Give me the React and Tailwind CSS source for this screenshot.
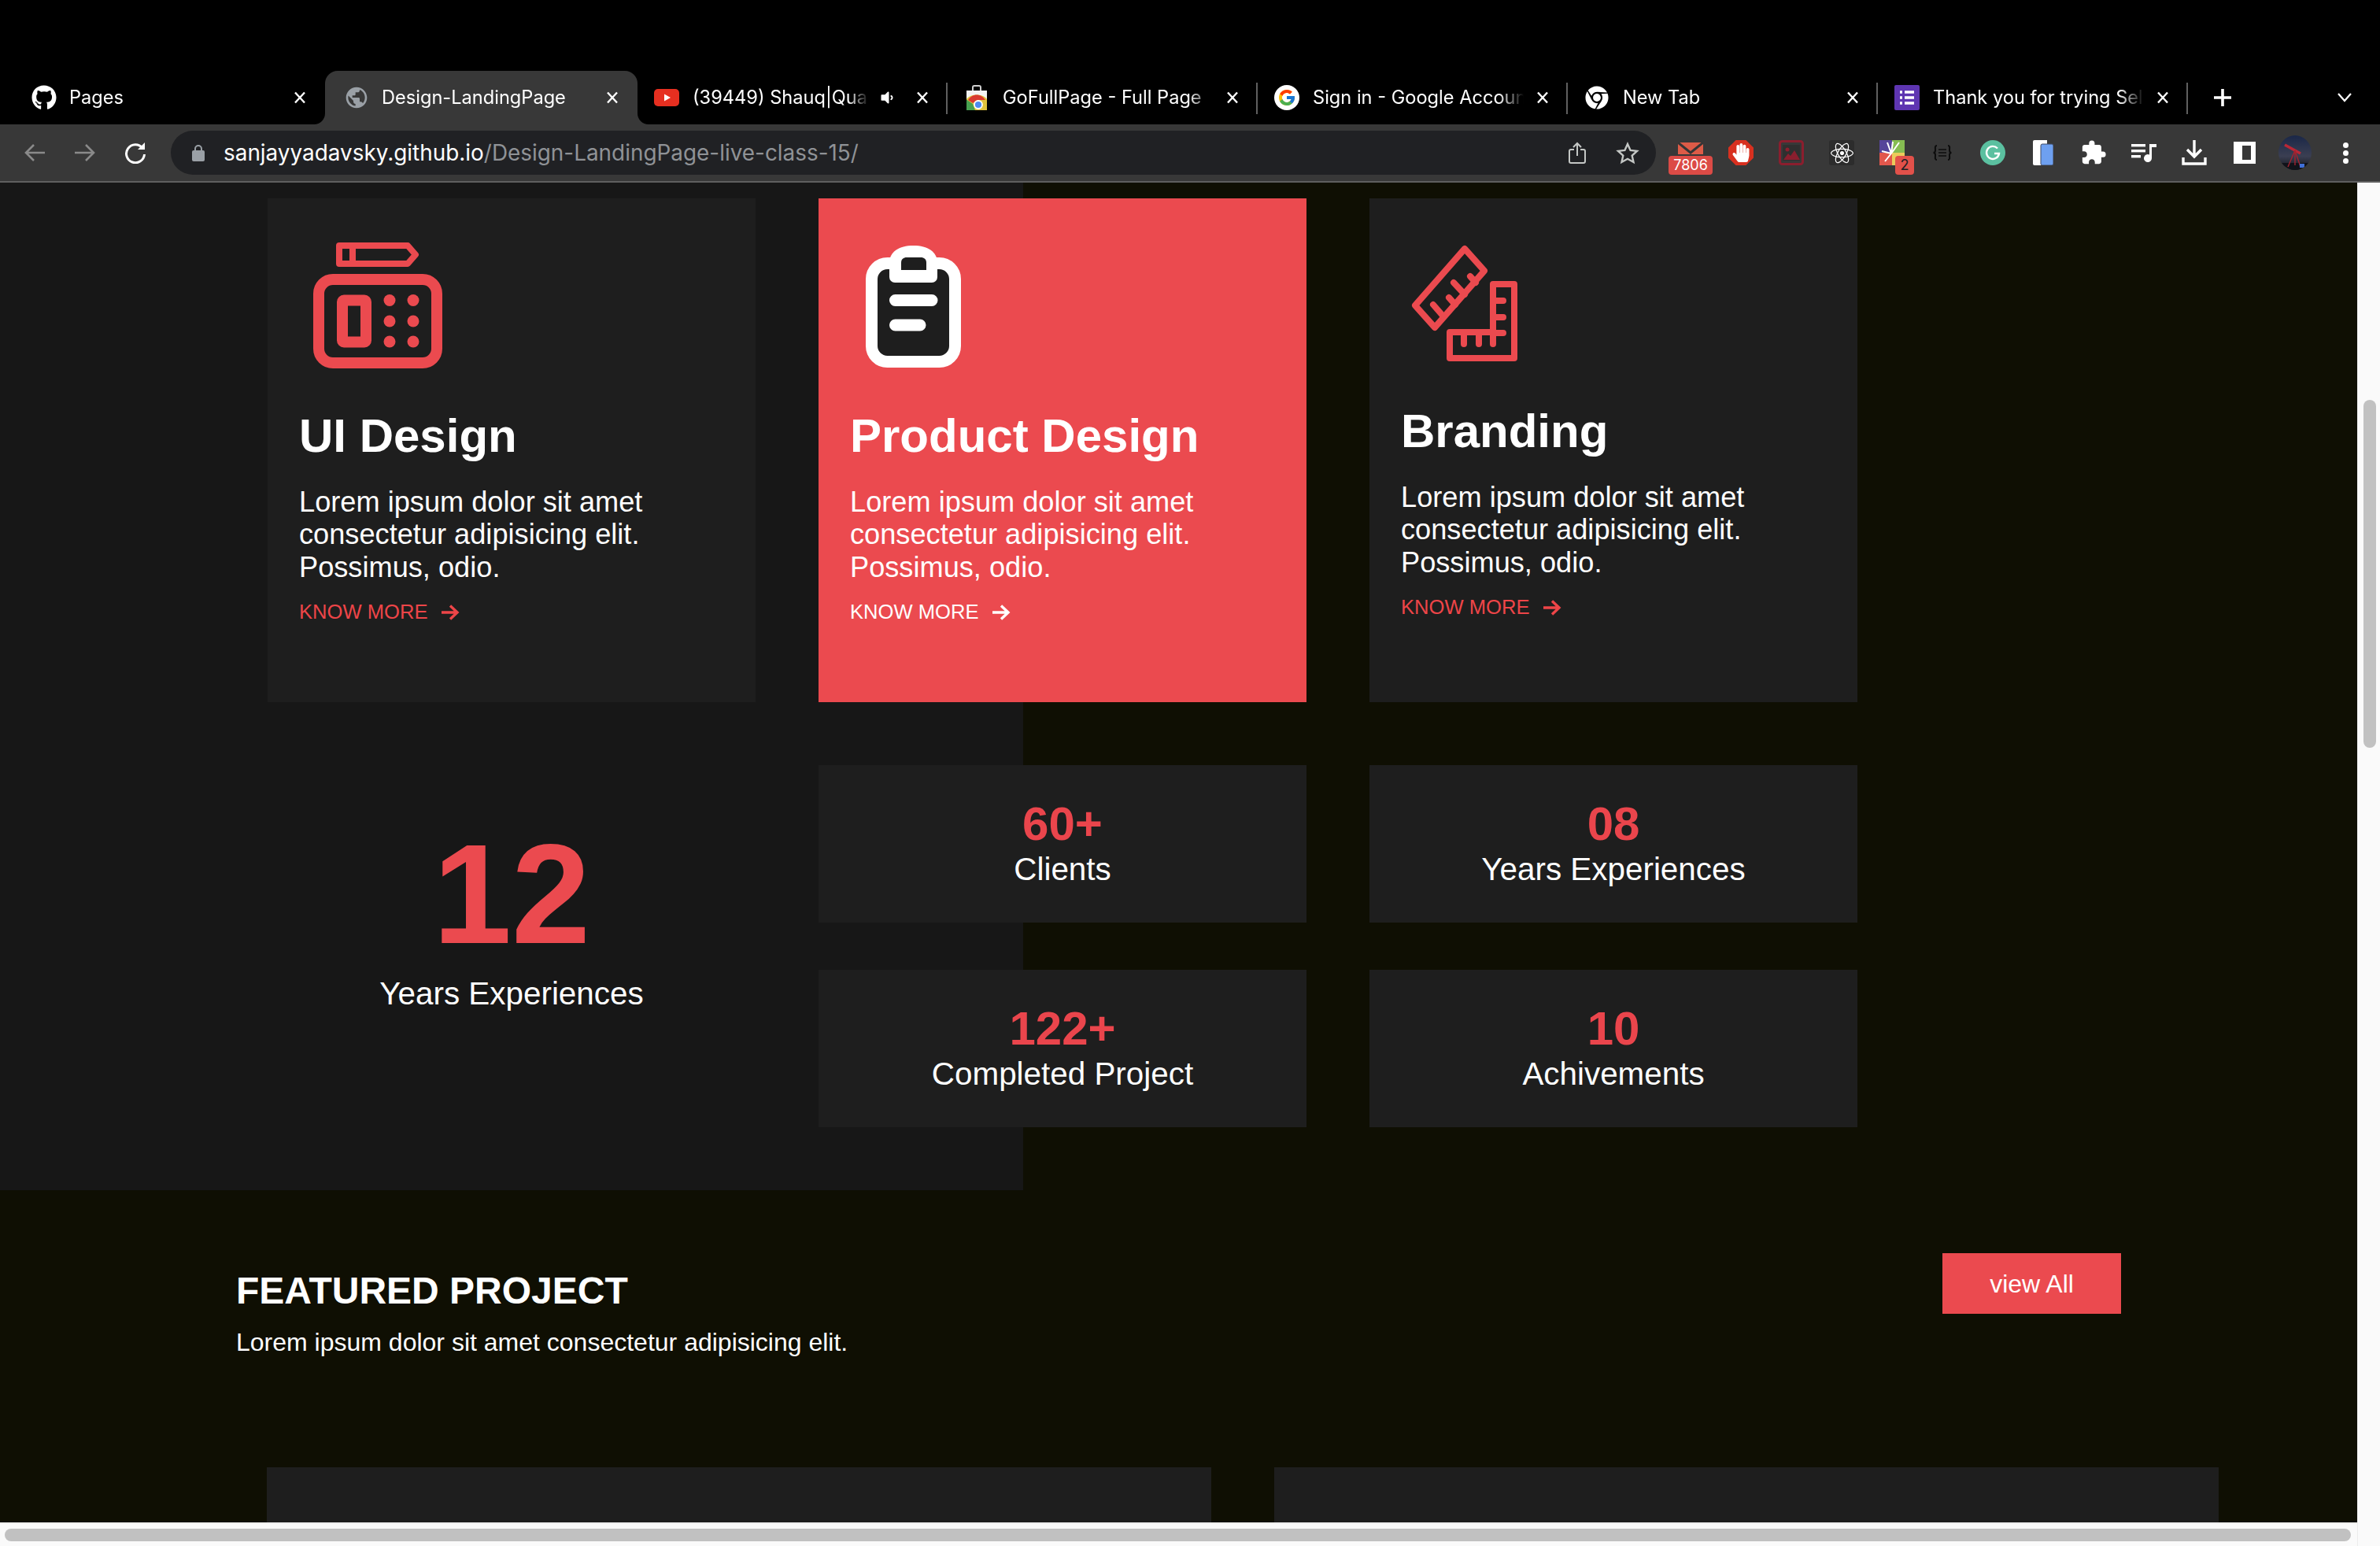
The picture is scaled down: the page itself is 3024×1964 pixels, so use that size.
import { FaGithub, FaChrome, FaHandPaper, FaReact, FaVolumeDown } from "react-icons/fa";
import { MdPublic, MdExtension } from "react-icons/md";
import { FcGoogle } from "react-icons/fc";

const RED = "#eb4a4f";

function CloseX() {
  return (
    <svg width="16" height="16" viewBox="0 0 16 16" className="shrink-0">
      <path d="M2 1.5L14 14.5M14 1.5L2 14.5" stroke="#fff" strokeWidth="2.4" />
    </svg>
  );
}

function YoutubeIcon() {
  return (
    <svg width="32" height="32" viewBox="0 0 32 32">
      <rect x="0" y="5" width="32" height="22" rx="5" fill="#e62f20" />
      <path d="M13 11.5L21 16L13 20.5Z" fill="#fff" />
    </svg>
  );
}

function StoreIcon() {
  return (
    <svg width="26" height="32" viewBox="0 0 26 32">
      <path d="M8 8V3a2 2 0 0 1 2-2h6a2 2 0 0 1 2 2v5" fill="none" stroke="#cfcfcf" strokeWidth="2" />
      <rect x="0" y="7" width="26" height="25" fill="#f3f3f3" />
      <path d="M0 32V18C3 14 8 12.5 13 12.5S23 14 26 18V32Z" fill="#e0c33d" />
      <path d="M2 19C5 14.5 9 12.5 13 12.5S21 14.5 24 19H14L8 23Z" fill="#d93a2f" />
      <path d="M0 18.5L8 24L11 32H0Z" fill="#46a04f" />
      <circle cx="15" cy="25" r="5" fill="#4c8bf0" stroke="#fff" strokeWidth="1.8" />
    </svg>
  );
}

function GoogleIcon() {
  return (
    <span className="flex h-[32px] w-[32px] items-center justify-center rounded-full bg-white">
      <FcGoogle size={24} />
    </span>
  );
}

function FormsIcon() {
  return (
    <svg width="32" height="32" viewBox="0 0 32 32">
      <rect width="32" height="32" rx="2" fill="#5e35b1" />
      <path d="M7 9h3M13 9h12M7 16h3M13 16h12M7 23h3M13 23h12" stroke="#fff" strokeWidth="3.4" />
    </svg>
  );
}

const tabs = [
  { title: "Pages", icon: <FaGithub size={32} color="#fff" />, first: true },
  { title: "Design-LandingPage", icon: <MdPublic size={34} color="#9aa0a6" />, active: true },
  { title: "(39449) Shauq|Qua", icon: <YoutubeIcon />, audio: true },
  { title: "GoFullPage - Full Page", icon: <StoreIcon />, sep: true },
  { title: "Sign in - Google Accoun", icon: <GoogleIcon />, sep: true },
  { title: "New Tab", icon: <FaChrome size={30} color="#fff" />, sep: true },
  { title: "Thank you for trying Sel", icon: <FormsIcon />, sep: true },
];

function Tab({ tab }) {
  return (
    <div className={`relative flex h-[68px] shrink-0 items-center pl-[24px] ${tab.first ? "w-[397px] pr-[24px]" : "w-[394px] pr-[21px]"}`}>
      {tab.active && (
        <>
          <div className="absolute inset-y-0 left-0 -right-[3px] rounded-t-[16px] bg-[#383838]" />
          <svg width="14" height="14" viewBox="0 0 14 14" className="absolute bottom-0 -left-[14px]">
            <path d="M14 0V14H0A14 14 0 0 0 14 0Z" fill="#383838" />
          </svg>
          <svg width="14" height="14" viewBox="0 0 14 14" className="absolute bottom-0 -right-[17px]">
            <path d="M0 0V14H14A14 14 0 0 1 0 0Z" fill="#383838" />
          </svg>
        </>
      )}
      {tab.sep && <div className="absolute left-[1px] top-[15px] h-[40px] w-[2px] bg-[#5f5f5f]" />}
      <div className="relative flex w-[32px] shrink-0 items-center justify-center">{tab.icon}</div>
      <div className={`relative min-w-0 flex-1 whitespace-nowrap text-[23.6px] leading-[32px] text-white [mask-image:linear-gradient(to_right,black_88%,transparent)] ${tab.first || tab.active ? "ml-[16px]" : "ml-[17px]"} ${tab.audio ? "mr-[13px]" : "mr-[16px]"}`}>
        {tab.title}
      </div>
      {tab.audio && (
        <span className="relative mr-[27px] flex w-[20px] shrink-0 justify-center">
          <FaVolumeDown size={20} color="#fff" />
        </span>
      )}
      <div className="relative">
        <CloseX />
      </div>
    </div>
  );
}

function TabStrip() {
  return (
    <div className="flex h-[158px] shrink-0 items-end bg-black pl-[16px]">
      {tabs.map((tab) => (
        <Tab key={tab.title} tab={tab} />
      ))}
      <div className="relative flex h-[68px] w-[94px] shrink-0 items-center justify-center">
        <div className="absolute left-[1px] top-[15px] h-[40px] w-[2px] bg-[#5f5f5f]" />
        <svg width="24" height="24" viewBox="0 0 24 24">
          <path d="M12 1V23M1 12H23" stroke="#fff" strokeWidth="3.6" />
        </svg>
      </div>
      <div className="ml-[99px] flex h-[68px] items-center">
        <svg width="18" height="12" viewBox="0 0 18 12">
          <path d="M1 1L9 10L17 1" fill="none" stroke="#fff" strokeWidth="2.2" />
        </svg>
      </div>
    </div>
  );
}

function GmailExt() {
  return (
    <div className="relative h-[72px] w-[64px]">
      <svg width="32" height="16" viewBox="0 0 32 16" className="absolute left-[16px] top-[23px]">
        <rect width="32" height="15" fill="#dd5b47" />
        <path d="M0 0L16 13L32 0" fill="none" stroke="#353535" strokeWidth="3" />
      </svg>
      <div className="absolute left-[4px] top-[40px] flex h-[24px] w-[56px] items-center justify-center rounded-[4px] bg-[#dc4b46] text-[18px] leading-none text-white">
        7806
      </div>
    </div>
  );
}

function StopExt() {
  return (
    <div className="relative flex h-[32px] w-[32px] items-center justify-center bg-[#d8301f] [clip-path:polygon(30%_0,70%_0,100%_30%,100%_70%,70%_100%,30%_100%,0_70%,0_30%)]">
      <FaHandPaper size={24} color="#fff" />
    </div>
  );
}

function ImageExt() {
  return (
    <svg width="32" height="32" viewBox="0 0 32 32">
      <rect x="1.5" y="1.5" width="29" height="29" rx="3" fill="none" stroke="#8b1e2e" strokeWidth="3" />
      <rect x="5" y="6" width="22" height="20" fill="#2f2f2f" />
      <circle cx="11" cy="12" r="2.5" fill="#8b1e2e" />
      <path d="M6 25L12 17L15 20L20 13L27 25Z" fill="#8b1e2e" />
    </svg>
  );
}

function ReactExt() {
  return (
    <div className="flex h-[32px] w-[32px] items-center justify-center rounded-[3px] bg-[#2c2c2c]">
      <FaReact size={29} color="#fff" />
    </div>
  );
}

function ColorExt() {
  return (
    <div className="relative h-[72px] w-[64px]">
      <svg width="32" height="32" viewBox="0 0 32 32" className="absolute left-[16px] top-[20px]">
        <rect width="16" height="16" fill="#56459a" />
        <rect x="16" width="16" height="16" fill="#86bd52" />
        <rect y="16" width="16" height="16" fill="#e2574c" />
        <rect x="16" y="16" width="16" height="16" fill="#eccb5b" />
        <path d="M15 17L3 14M15 17L10 3M15 17L17 2M15 17L25 3M15 17L7 27" stroke="#fff" strokeWidth="2" />
      </svg>
      <div className="absolute left-[36px] top-[40px] flex h-[24px] w-[24px] items-center justify-center rounded-[4px] bg-[#e2514a] text-[18px] leading-none text-[#202124]">
        2
      </div>
    </div>
  );
}

function BracesExt() {
  return (
    <svg width="26" height="20" viewBox="0 0 26 20" fill="none" stroke="#0c0c0c" strokeWidth="2">
      <path d="M6 1C3 1 4 4 4 7C4 9 3 10 1.5 10C3 10 4 11 4 13C4 16 3 19 6 19" />
      <path d="M20 1C23 1 22 4 22 7C22 9 23 10 24.5 10C23 10 22 11 22 13C22 16 23 19 20 19" />
      <path d="M8 6H18M8 10H18M8 14H18" strokeWidth="1.6" />
    </svg>
  );
}

function GrammarlyExt() {
  return (
    <svg width="32" height="32" viewBox="0 0 32 32">
      <circle cx="16" cy="16" r="16" fill="#5bc0a0" />
      <path d="M22 10.5A8 8 0 1 0 24 17H18" fill="none" stroke="#fff" strokeWidth="2.4" />
    </svg>
  );
}

function PagesExt() {
  return (
    <svg width="26" height="32" viewBox="0 0 26 32">
      <path d="M2 0H18V32H2A2 2 0 0 1 0 30V2A2 2 0 0 1 2 0Z" fill="#fff" />
      <rect x="10" y="5" width="16" height="27" rx="2" fill="#6ea0f0" stroke="#3f4a63" strokeWidth="1" />
    </svg>
  );
}

function MusicIcon() {
  return (
    <svg width="32" height="24" viewBox="0 0 32 24" fill="#fff">
      <rect x="0" y="1" width="18" height="3.4" />
      <rect x="0" y="8" width="18" height="3.4" />
      <rect x="0" y="15" width="12" height="3.4" />
      <path d="M23 1H32V5H26V19A5 5 0 1 1 23 14.5Z" />
    </svg>
  );
}

function DownloadIcon() {
  return (
    <svg width="32" height="32" viewBox="0 0 32 32" fill="none" stroke="#fff" strokeWidth="3.4">
      <path d="M16 0V20M7 12L16 21L25 12" />
      <path d="M2 22V30H30V22" />
    </svg>
  );
}

function SidePanelIcon() {
  return (
    <svg width="28" height="28" viewBox="0 0 28 28">
      <path fillRule="evenodd" d="M0 0H28V28H0ZM11 5V23H22V5Z" fill="#fff" />
    </svg>
  );
}

function Avatar() {
  return (
    <svg width="42" height="44" viewBox="0 0 42 44">
      <defs>
        <linearGradient id="sky" x1="0" y1="0" x2="0" y2="1">
          <stop offset="0" stopColor="#1a2748" />
          <stop offset="0.6" stopColor="#3b3f52" />
          <stop offset="1" stopColor="#101219" />
        </linearGradient>
        <clipPath id="round">
          <ellipse cx="21" cy="22" rx="21" ry="22" />
        </clipPath>
      </defs>
      <g clipPath="url(#round)">
        <rect width="42" height="44" fill="url(#sky)" />
        <rect y="35" width="42" height="9" fill="#101219" />
        <path d="M8 12L28 23" stroke="#b92736" strokeWidth="3.6" />
        <path d="M21 19L12 40M21 19L28 40M21 19L21 38" stroke="#a3222f" strokeWidth="1.4" />
        <rect x="27" y="36" width="6" height="5" fill="#3f6fd8" />
      </g>
    </svg>
  );
}

const extensions = [
  <GmailExt key="gmail" />,
  <StopExt key="stop" />,
  <ImageExt key="image" />,
  <ReactExt key="react" />,
  <ColorExt key="color" />,
  <BracesExt key="braces" />,
  <GrammarlyExt key="grammarly" />,
  <PagesExt key="pages" />,
  <MdExtension key="puzzle" size={34} color="#fff" />,
  <MusicIcon key="music" />,
  <DownloadIcon key="download" />,
  <SidePanelIcon key="panel" />,
  <Avatar key="avatar" />,
];

function Toolbar() {
  return (
    <div className="flex h-[74px] shrink-0 border-b-2 border-[#5f5f5f] bg-[#383838] pl-[12px]">
      <div className="flex h-[72px] w-[64px] items-center justify-center">
        <svg width="28" height="24" viewBox="0 0 28 24" fill="none" stroke="#8a8a8a" strokeWidth="2.6">
          <path d="M27 12H3M13 2L3 12L13 22" />
        </svg>
      </div>
      <div className="flex h-[72px] w-[64px] items-center justify-center">
        <svg width="28" height="24" viewBox="0 0 28 24" fill="none" stroke="#8a8a8a" strokeWidth="2.6">
          <path d="M1 12H25M15 2L25 12L15 22" />
        </svg>
      </div>
      <div className="flex h-[72px] w-[64px] items-center justify-center">
        <svg width="28" height="28" viewBox="0 0 28 28" fill="none" stroke="#fff" strokeWidth="3">
          <path d="M23 8A11.5 11.5 0 1 0 25.5 16" />
          <path d="M26 1V10H17Z" fill="#fff" stroke="none" />
        </svg>
      </div>
      <div className="ml-[13px] mt-[8px] flex h-[56px] w-[1887px] items-center rounded-full bg-[#202124] pl-[27px] pr-[4px]">
        <svg width="16" height="22" viewBox="0 0 16 22" className="shrink-0">
          <path d="M4 9V6a4 4 0 0 1 8 0v3" fill="none" stroke="#9aa0a6" strokeWidth="2" />
          <rect y="8" width="16" height="14" rx="2" fill="#9aa0a6" />
        </svg>
        <div className="ml-[24px] flex-1 whitespace-nowrap text-[27.9px] leading-[34px] text-[#8f9296]">
          <span className="text-white">sanjayyadavsky.github.io</span>/Design-LandingPage-live-class-15/
        </div>
        <div className="flex w-[64px] justify-center">
          <svg width="22" height="28" viewBox="0 0 22 28" fill="none" stroke="#c4c7c5" strokeWidth="2">
            <path d="M7 10H3a2 2 0 0 0-2 2v13a2 2 0 0 0 2 2h16a2 2 0 0 0 2-2V12a2 2 0 0 0-2-2h-4" />
            <path d="M11 18V2M6 7L11 2L16 7" />
          </svg>
        </div>
        <div className="flex w-[64px] justify-center">
          <svg width="30" height="29" viewBox="0 0 30 29" fill="none" stroke="#c4c7c5" strokeWidth="2.4">
            <path d="M15 3L18.6 11L27 11.9L20.7 17.7L22.5 26L15 21.8L7.5 26L9.3 17.7L3 11.9L11.4 11Z" />
          </svg>
        </div>
      </div>
      <div className="ml-[12px] flex">
        {extensions.map((ext) => (
          <div key={ext.key} className="flex h-[72px] w-[64px] items-center justify-center">
            {ext}
          </div>
        ))}
        <div className="flex h-[72px] w-[64px] flex-col items-center justify-center gap-[3px]">
          <span className="h-[7px] w-[7px] rounded-full bg-white" />
          <span className="h-[7px] w-[7px] rounded-full bg-white" />
          <span className="h-[7px] w-[7px] rounded-full bg-white" />
        </div>
      </div>
    </div>
  );
}

function PadIcon() {
  return (
    <svg width="164" height="160" viewBox="0 0 164 160" fill="none" stroke={RED} className="ml-[18px] mt-[56px] block">
      <path d="M33 4H120L130 15.5L120 27H33ZM50 4V27" strokeWidth="8" strokeLinejoin="round" />
      <rect x="7" y="47" width="150" height="106" rx="18" strokeWidth="14" />
      <rect x="37" y="73.5" width="30" height="53" rx="2" strokeWidth="14" strokeLinejoin="round" />
      <g fill={RED} stroke="none">
        <circle cx="97" cy="73.5" r="7.5" />
        <circle cx="127" cy="73.5" r="7.5" />
        <circle cx="97" cy="100" r="7.5" />
        <circle cx="127" cy="100" r="7.5" />
        <circle cx="97" cy="126" r="7.5" />
        <circle cx="127" cy="126" r="7.5" />
      </g>
    </svg>
  );
}

function ClipboardIcon() {
  return (
    <svg width="121" height="155" viewBox="0 0 121 155" className="ml-[20px] mt-[60px] block">
      <rect x="7.5" y="22.5" width="106" height="125" rx="20" fill="#1e1e1e" stroke="#fff" strokeWidth="15" />
      <path d="M30 22C30 8 42 0 60.5 0S91 8 91 22V40A7 7 0 0 1 84 47H37A7 7 0 0 1 30 40Z" fill="#fff" />
      <path d="M45 31V22C45 17 48 15 52 15H70C74 15 77 17 77 22V31Z" fill="#1e1e1e" />
      <path d="M37.5 69.5H84M37.5 101H69" stroke="#fff" strokeWidth="15" strokeLinecap="round" />
    </svg>
  );
}

function RulerIcon() {
  return (
    <svg width="135" height="148" viewBox="0 0 135 148" fill="none" stroke={RED} strokeWidth="8" strokeLinecap="round" strokeLinejoin="round" className="ml-[13px] mt-[59px] block">
      <path d="M68 5L93 33L30 105L5 77Z" />
      <path d="M75 40L82 48M54 48L68 63M48 67L56 76M28 76L41 91" />
      <path d="M104 50H131V144H49V111H104Z" />
      <path d="M104 71H117M104 92H117M104 112H117M67 111V126M86 111V126M104 111V126" />
    </svg>
  );
}

function ArrowRight({ color }) {
  return (
    <svg width="24" height="20" viewBox="0 0 24 20" fill="none" stroke={color} strokeWidth="3.4" className="ml-[16px]">
      <path d="M1 10H21M12 1.5L21 10L12 18.5" />
    </svg>
  );
}

function ServiceCard({ active, icon, title, headingClass }) {
  return (
    <div className={`h-[640px] pl-[40px] pr-[38px] text-white ${active ? "bg-[#eb4a4f]" : "bg-[#1e1e1e]"}`}>
      {icon}
      <h2 className={`text-[60px] font-bold leading-[69px] ${headingClass}`}>{title}</h2>
      <p className="mt-[29px] text-[36.2px] leading-[41.4px]">Lorem ipsum dolor sit amet consectetur adipisicing elit. Possimus, odio.</p>
      <a className={`mt-[22px] flex items-center text-[25.6px] leading-[29.4px] ${active ? "text-white" : "text-[#ee4548]"}`}>
        KNOW MORE
        <ArrowRight color={active ? "#fff" : "#ee4548"} />
      </a>
    </div>
  );
}

function StatCard({ value, label }) {
  return (
    <div className="flex h-[200px] flex-col items-center bg-[#1e1e1e] pt-[40px]">
      <div className="text-[60px] font-bold leading-[69px] text-[#ea454c]">{value}</div>
      <div className="text-[40.4px] leading-[46px] text-white">{label}</div>
    </div>
  );
}

function Page() {
  return (
    <div className="min-h-0 flex-1 overflow-hidden bg-[#0f0f03] font-['Liberation_Sans',Arial,sans-serif]">
      <section className="flex flex-col gap-[80px] bg-[linear-gradient(to_right,#171717_1300px,#0f0f03_1300px)] pb-[80px] pl-[340px] pt-[20px]">
        <div className="grid grid-cols-[620px_620px_620px] gap-x-[80px]">
          <ServiceCard icon={<PadIcon />} title="UI Design" headingClass="mt-[51px]" />
          <ServiceCard active icon={<ClipboardIcon />} title="Product Design" headingClass="mt-[52px]" />
          <ServiceCard icon={<RulerIcon />} title="Branding" headingClass="mt-[54px]" />
        </div>
        <div className="grid grid-cols-[620px_620px_620px] gap-x-[80px] gap-y-[60px]">
          <div className="row-span-2 flex flex-col items-center pt-[60px]">
            <div className="text-[180px] font-bold leading-[207px] text-[#eb4a4f]">12</div>
            <div className="text-[40.4px] leading-[46px] text-white">Years Experiences</div>
          </div>
          <StatCard value="60+" label="Clients" />
          <StatCard value="08" label="Years Experiences" />
          <StatCard value="122+" label="Completed Project" />
          <StatCard value="10" label="Achivements" />
        </div>
      </section>
      <section>
        <div className="flex items-start justify-between pl-[300px] pr-[300px] pt-[80px]">
          <div className="pt-[20px]">
            <h2 className="text-[48px] font-bold leading-[55px] text-white">FEATURED PROJECT</h2>
            <p className="mt-[20px] text-[32px] leading-[37px] text-white">Lorem ipsum dolor sit amet consectetur adipisicing elit.</p>
          </div>
          <button className="h-[77px] w-[227px] bg-[#eb4a4f] text-[32px] text-white">view All</button>
        </div>
        <div className="mt-[140px] flex gap-[80px] pl-[339px]">
          <div className="h-[300px] w-[1200px] bg-[#1e1e1e]" />
          <div className="h-[300px] w-[1200px] bg-[#1e1e1e]" />
        </div>
      </section>
    </div>
  );
}

export default function App() {
  return (
    <div className="flex h-screen w-screen flex-col overflow-hidden bg-black font-['Inter',sans-serif]">
      <TabStrip />
      <Toolbar />
      <div className="flex min-h-0 flex-1">
        <div className="flex min-w-0 flex-1 flex-col">
          <Page />
          {/* horizontal scrollbar */}
          <div className="h-[30px] shrink-0 border-t-2 border-[#efefef] bg-[#fafafa] pl-[6px] pt-[6px]">
            <div className="h-[16px] w-[2981px] rounded-full bg-[#c1c1c1]" />
          </div>
        </div>
        {/* vertical scrollbar */}
        <div className="w-[29px] shrink-0 border-l border-[#ececec] bg-[#fafafa] pl-[7px] pt-[276px]">
          <div className="h-[442px] w-[16px] rounded-full bg-[#c1c1c1]" />
        </div>
      </div>
    </div>
  );
}
